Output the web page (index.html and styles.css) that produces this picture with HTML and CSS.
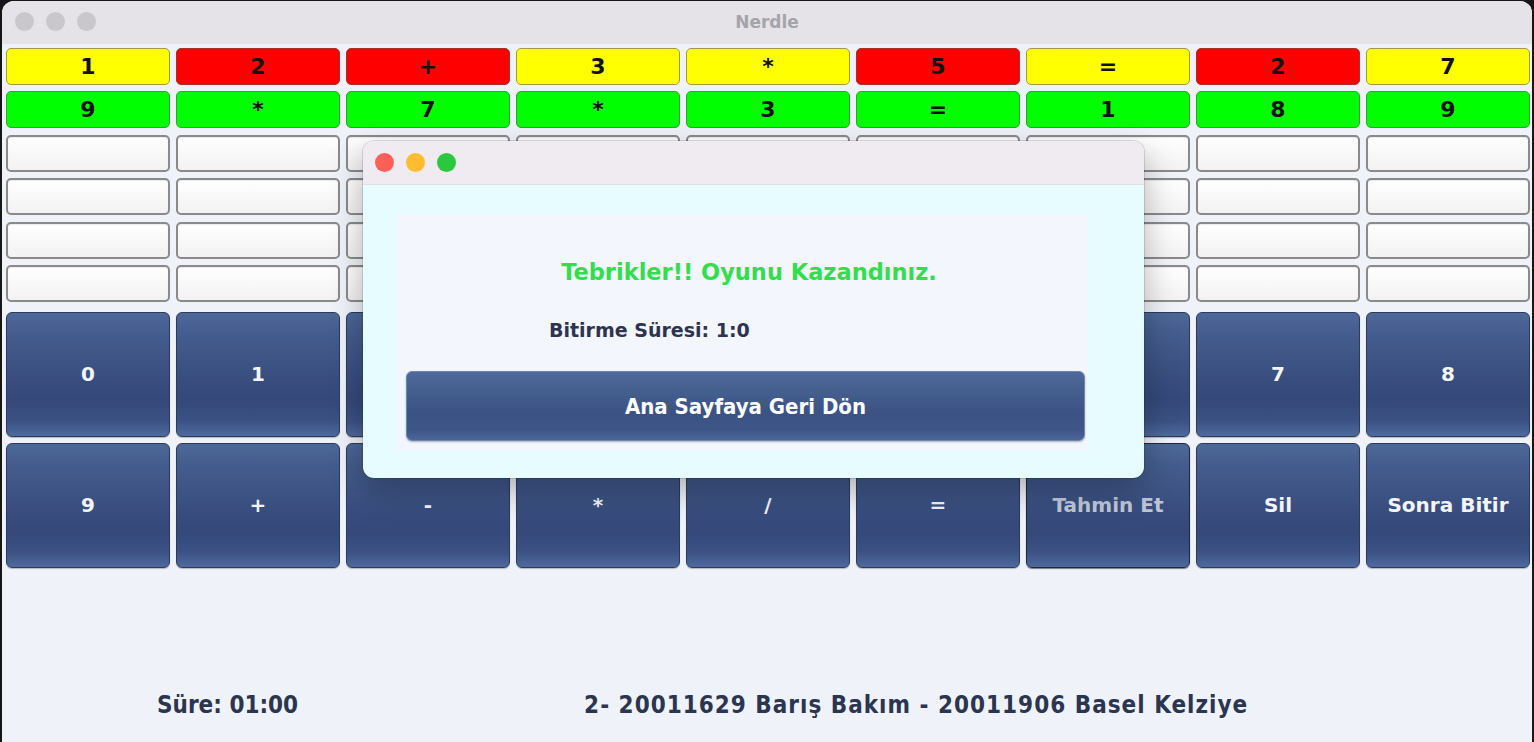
FILE: index.html
```html
<!DOCTYPE html>
<html lang="tr">
<head>
<meta charset="utf-8">
<title>Nerdle</title>
<link rel="stylesheet" href="styles.css">
</head>
<body>
<div class="window">
  <div class="titlebar">
    <div class="lights"><span class="light gray"></span><span class="light gray"></span><span class="light gray"></span></div>
    <div class="title">Nerdle</div>
  </div>
  <div class="content">
    <div class="board">
      <div class="cell yellow">1</div><div class="cell red">2</div><div class="cell red">+</div><div class="cell yellow">3</div><div class="cell yellow">*</div><div class="cell red">5</div><div class="cell yellow">=</div><div class="cell red">2</div><div class="cell yellow">7</div>
      <div class="cell green">9</div><div class="cell green">*</div><div class="cell green">7</div><div class="cell green">*</div><div class="cell green">3</div><div class="cell green">=</div><div class="cell green">1</div><div class="cell green">8</div><div class="cell green">9</div>
      <div class="cell empty"></div><div class="cell empty"></div><div class="cell empty"></div><div class="cell empty"></div><div class="cell empty"></div><div class="cell empty"></div><div class="cell empty"></div><div class="cell empty"></div><div class="cell empty"></div>
      <div class="cell empty"></div><div class="cell empty"></div><div class="cell empty"></div><div class="cell empty"></div><div class="cell empty"></div><div class="cell empty"></div><div class="cell empty"></div><div class="cell empty"></div><div class="cell empty"></div>
      <div class="cell empty"></div><div class="cell empty"></div><div class="cell empty"></div><div class="cell empty"></div><div class="cell empty"></div><div class="cell empty"></div><div class="cell empty"></div><div class="cell empty"></div><div class="cell empty"></div>
      <div class="cell empty"></div><div class="cell empty"></div><div class="cell empty"></div><div class="cell empty"></div><div class="cell empty"></div><div class="cell empty"></div><div class="cell empty"></div><div class="cell empty"></div><div class="cell empty"></div>
    </div>
    <div class="keypad">
      <button class="key">0</button><button class="key">1</button><button class="key">2</button><button class="key">3</button><button class="key">4</button><button class="key">5</button><button class="key">6</button><button class="key">7</button><button class="key">8</button>
      <button class="key">9</button><button class="key">+</button><button class="key">-</button><button class="key">*</button><button class="key">/</button><button class="key">=</button><button class="key key-guess">Tahmin Et</button><button class="key">Sil</button><button class="key">Sonra Bitir</button>
    </div>
    <div class="footer">
      <span class="timer">Süre: 01:00</span>
      <span class="authors">2- 20011629 Barış Bakım - 20011906 Basel Kelziye</span>
    </div>
  </div>

  <div class="dialog">
    <div class="dialog-titlebar">
      <span class="light red"></span><span class="light yellow"></span><span class="light green"></span>
    </div>
    <div class="dialog-body">
      <div class="dialog-panel">
        <div class="win-text">Tebrikler!! Oyunu Kazandınız.</div>
        <div class="time-text">Bitirme Süresi: 1:0</div>
        <button class="home-btn">Ana Sayfaya Geri Dön</button>
      </div>
    </div>
  </div>
</div>
</body>
</html>
```

FILE: styles.css
```css
html, body {
  margin: 0;
  padding: 0;
  background: #161616;
  width: 1534px;
  height: 742px;
  overflow: hidden;
}

.window {
  position: relative;
  margin: 1px 0 0 2px;
  width: 1530px;
  height: 741px;
  border-radius: 12px 12px 0 0;
  overflow: hidden;
  background: #eff3f9;
  font-family: "DejaVu Sans", "Noto Sans", sans-serif;
}

.titlebar {
  position: relative;
  height: 43px;
  background: #e5e3e8;
  display: flex;
  align-items: center;
  justify-content: center;
}

.lights {
  position: absolute;
  left: 13px;
  top: 11px;
  display: flex;
  gap: 12px;
}

.light {
  display: block;
  width: 19px;
  height: 19px;
  border-radius: 50%;
}

.light.gray { background: #c9c7cc; }
.light.red { background: #fe5f57; }
.light.yellow { background: #febc2e; }
.light.green { background: #2ac83f; }

.title {
  font-weight: bold;
  font-size: 17px;
  color: #a5a4a8;
  margin-top: -2px;
}

.content {
  padding: 4px 2px 0 4px;
}

.board {
  display: grid;
  grid-template-columns: repeat(9, 1fr);
  grid-template-rows: repeat(6, 37px);
  column-gap: 6px;
  row-gap: 6.4px;
}

.cell {
  box-sizing: border-box;
  border-radius: 5px;
  display: flex;
  align-items: center;
  justify-content: center;
  font-weight: bold;
  font-size: 22px;
  color: #111;
  border: 1.5px solid rgba(0, 0, 0, 0.38);
}

.cell.yellow { background: #ffff00; border-color: #a29a45; }
.cell.red { background: #ff0000; border-color: #a8302c; }
.cell.green { background: #00ff00; border-color: #3d9a3d; }

.cell.empty {
  background: linear-gradient(#ffffff, #f2f2f2);
  border: 2px solid #8a8a8a;
  box-shadow: inset 0 1px 1px rgba(0, 0, 0, 0.08);
}

.keypad {
  margin-top: 10px;
  display: grid;
  grid-template-columns: repeat(9, 1fr);
  grid-template-rows: repeat(2, 125px);
  gap: 6px;
}

.key {
  box-sizing: border-box;
  margin: 0;
  padding: 0;
  border: 1px solid #2c3b5b;
  border-radius: 6px;
  background: linear-gradient(to bottom, #4d6898 0%, #445c8d 18%, #384d7e 55%, #34497a 72%, #3c5284 88%, #4e6a9e 100%);
  box-shadow: 0 1px 1px rgba(0, 0, 0, 0.25);
  color: #f2f4f8;
  font-family: "DejaVu Sans", sans-serif;
  font-weight: bold;
  font-size: 20px;
}

.key-guess {
  color: #bfc7d7;
  border-color: #1c2740;
  box-shadow: 0 1px 1px rgba(0, 0, 0, 0.5);
}

.footer {
  margin-top: 123px;
  height: 28px;
  line-height: 28px;
  display: flex;
  padding-left: 151px;
  gap: 286px;
  font-family: "DejaVu Sans Condensed", "DejaVu Sans", sans-serif;
  font-weight: bold;
  font-size: 24px;
  color: #2b3550;
}

.authors {
  letter-spacing: 1px;
}

.dialog {
  position: absolute;
  left: 361px;
  top: 140px;
  width: 781px;
  height: 337px;
  border-radius: 11px;
  overflow: hidden;
  background: #e6fcff;
  box-shadow: 0 12px 32px rgba(0, 0, 0, 0.28), 0 0 0 1px rgba(0, 0, 0, 0.12);
  display: flex;
  flex-direction: column;
}

.dialog-titlebar {
  height: 43px;
  flex: none;
  background: #efebf0;
  border-bottom: 1px solid #e2dfe6;
  display: flex;
  align-items: center;
  gap: 12px;
  padding-left: 12px;
}

.dialog-body {
  flex: 1;
  padding: 29px 56px 27px 35px;
}

.dialog-panel {
  background: #f3f7fd;
  height: 100%;
  display: flex;
  flex-direction: column;
}

.win-text {
  margin-top: 45px;
  text-align: center;
  font-weight: bold;
  font-size: 22.5px;
  color: #31df4e;
  padding-left: 12px;
}

.time-text {
  margin-top: 34px;
  padding-left: 151px;
  font-weight: bold;
  font-size: 19px;
  color: #2c3450;
}

.home-btn {
  margin: 30px 3px 0 8px;
  height: 70px;
  flex: none;
  box-sizing: border-box;
  border: 1px solid #6d87b0;
  border-radius: 6px;
  background: linear-gradient(to bottom, #4f6a9a 0%, #45608f 25%, #3b5285 60%, #3e5588 85%, #4b669a 100%);
  box-shadow: 0 1px 2px rgba(0, 0, 0, 0.3);
  color: #ffffff;
  font-family: "DejaVu Sans Condensed", "DejaVu Sans", sans-serif;
  font-weight: bold;
  font-size: 22px;
}
```
